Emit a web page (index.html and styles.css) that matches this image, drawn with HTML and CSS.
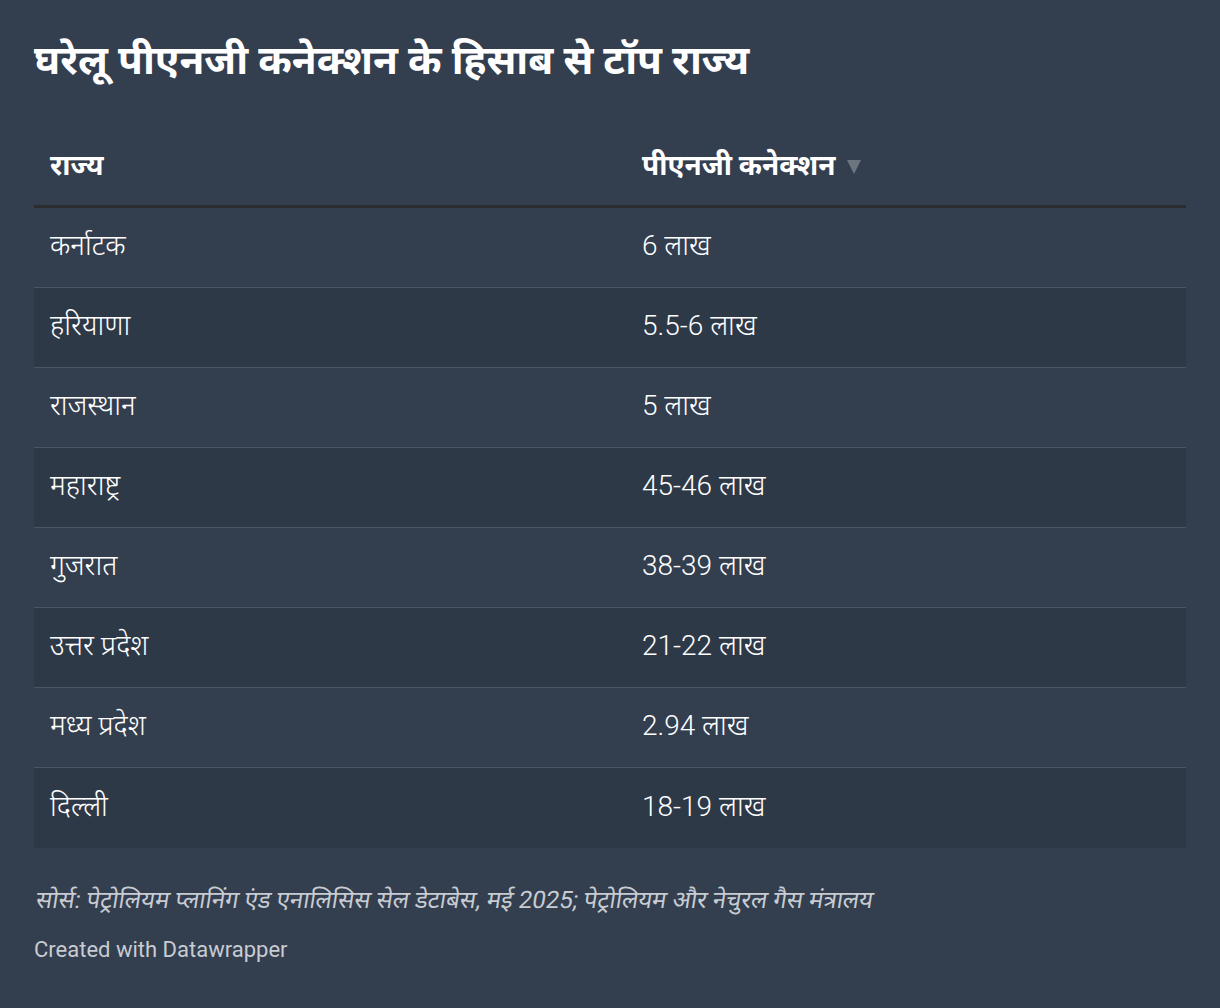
FILE: index.html
```html
<!DOCTYPE html>
<html lang="hi">
<head>
<meta charset="utf-8">
<link rel="stylesheet" href="styles.css">
</head>
<body>
<div class="chart">
  <h1 class="title">घरेलू पीएनजी कनेक्शन के हिसाब से टॉप राज्य</h1>
  <div class="table">
    <div class="row head">
      <div class="cell c1">राज्य</div>
      <div class="cell c2">पीएनजी कनेक्शन <svg class="sort" width="14" height="16" viewBox="0 0 14 16"><path d="M0 1 H14 L7 15 Z" fill="#6c7580"/></svg></div>
    </div>
    <div class="row"><div class="cell c1">कर्नाटक</div><div class="cell c2">6 लाख</div></div>
    <div class="row alt"><div class="cell c1">हरियाणा</div><div class="cell c2">5.5-6 लाख</div></div>
    <div class="row"><div class="cell c1">राजस्थान</div><div class="cell c2">5 लाख</div></div>
    <div class="row alt"><div class="cell c1">महाराष्ट्र</div><div class="cell c2">45-46 लाख</div></div>
    <div class="row"><div class="cell c1">गुजरात</div><div class="cell c2">38-39 लाख</div></div>
    <div class="row alt"><div class="cell c1">उत्तर प्रदेश</div><div class="cell c2">21-22 लाख</div></div>
    <div class="row"><div class="cell c1">मध्य प्रदेश</div><div class="cell c2">2.94 लाख</div></div>
    <div class="row alt last"><div class="cell c1">दिल्ली</div><div class="cell c2">18-19 लाख</div></div>
  </div>
  <p class="source"><span class="slant">सोर्स: पेट्रोलियम प्लानिंग एंड एनालिसिस सेल डेटाबेस, मई 2025; पेट्रोलियम और नेचुरल गैस मंत्रालय</span></p>
  <p class="credit">Created with Datawrapper</p>
</div>
</body>
</html>
```
FILE: styles.css
```css
html, body {
  margin: 0;
  padding: 0;
  background: #333e4f;
}
body {
  font-family: Roboto, "Noto Sans", "Noto Sans Devanagari", sans-serif;
  color: #ffffff;
}
.chart {
  padding: 34px 34px 40px 34px;
}
.title {
  margin: 0;
  font-size: 40.5px;
  font-weight: 700;
  line-height: 52px;
  color: #ffffff;
}
.table {
  margin-top: 40px;
  display: flex;
  flex-direction: column;
}
.row {
  box-sizing: border-box;
  display: grid;
  grid-template-columns: 592px 1fr;
  height: 80px;
  align-items: center;
  border-bottom: 1px solid #4a5567;
  font-size: 28px;
  font-weight: 300;
  line-height: 36px;
}
.row.alt {
  background: #2e3948;
}
.row.last {
  border-bottom: none;
}
.row.head {
  height: 82px;
  border-bottom: 3px solid #2b2c2e;
  font-weight: 700;
  font-size: 28px;
}
.cell {
  padding: 0 16px;
  display: flex;
  align-items: center;
}
.row:not(.head) .cell {
  padding-bottom: 3px;
}
.sort {
  margin-left: 12px;
  margin-top: 2px;
}
.source {
  margin: 37px 0 0 0;
  font-size: 24px;
  line-height: 30px;
  color: #c8ccd2;
}
.slant {
  display: inline-block;
  transform: skewX(-9deg);
  transform-origin: left bottom;
}
.credit {
  margin: 21px 0 0 0;
  font-size: 22px;
  line-height: 28px;
  color: #c8ccd2;
}
```
